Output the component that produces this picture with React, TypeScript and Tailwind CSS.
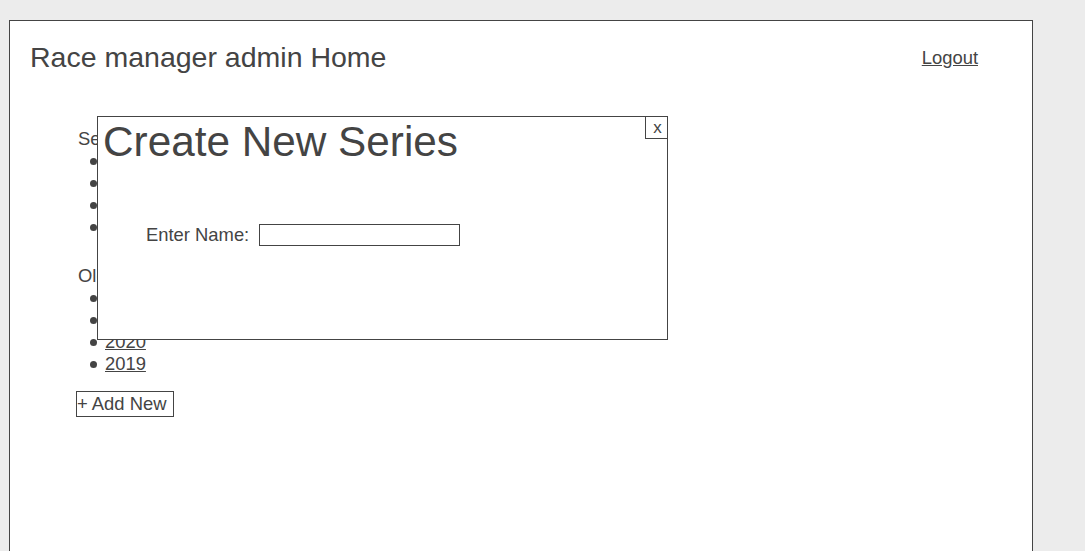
import React from "react";

const current = ["Spring 2024", "Summer 2024", "Autumn 2024", "Winter 2024"];
const older = ["2022", "2021", "2020", "2019"];

function Bullets({ items }: { items: string[] }) {
  return (
    <ul className="pl-[12px]">
      {items.map((s) => (
        <li key={s} className="flex items-center gap-[8px]">
          <span className="w-[7px] h-[7px] rounded-full bg-[#444] shrink-0 mt-[1px]" />
          <a href="#" className="underline">{s}</a>
        </li>
      ))}
    </ul>
  );
}

export default function App() {
  return (
    <div className="min-h-screen bg-[#ececec] pt-[20px] pl-[9px] text-[#444] font-['Liberation_Sans',Arial,sans-serif]">
      <div className="relative w-[1024px] h-[560px] bg-white border border-[#444] border-b-0">
        <div className="flex items-start justify-between pl-[20px] pr-[54px] pt-[19px]">
          <h1 className="text-[28.5px] leading-[34px]">Race manager admin Home</h1>
          <a href="#" className="text-[18.4px] underline mt-[4px]">Logout</a>
        </div>

        <div className="pl-[68px] pt-[54px] text-[18.4px] leading-[22px]">
          <p>Series</p>
          <Bullets items={current} />
          <p className="mt-[27px]">Older Series</p>
          <Bullets items={older} />
          <button className="mt-[16px] -ml-[2px] border border-[#444] pr-[7px] h-[26px] leading-[24px]">+ Add New</button>
        </div>

        <div className="absolute left-[87px] top-[95px] w-[571px] h-[224px] bg-white border border-[#444]">
          <button className="absolute right-[-1px] top-[-1px] w-[23px] h-[23px] border border-[#444] text-[17px] leading-[20px] pl-[2px]">x</button>
          <h2 className="text-[42.3px] leading-[50px] pl-[5px]">Create New Series</h2>
          <div className="flex items-center gap-[10px] pl-[48px] mt-[54px] text-[18.4px]">
            <label>Enter Name:</label>
            <input className="w-[201px] h-[22px] border border-[#444] outline-none" />
          </div>
        </div>
      </div>
    </div>
  );
}
